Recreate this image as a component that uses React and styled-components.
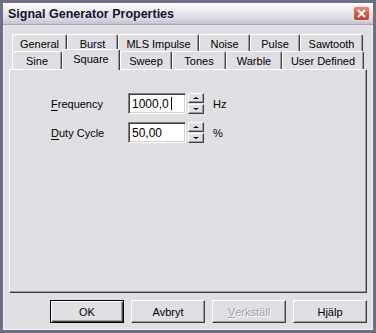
import React from 'react';
import styled, { createGlobalStyle, css } from 'styled-components';

const GlobalStyle = createGlobalStyle`
  html, body {
    margin: 0;
    padding: 0;
    background: #e0dfe3;
  }
  * { box-sizing: border-box; }
`;

const row1 = [
  ['General', 55],
  ['Burst', 51],
  ['MLS Impulse', 81],
  ['Noise', 51],
  ['Pulse', 50],
  ['Sawtooth', 63],
];

const row2 = [
  ['Sine', 50],
  ['Square', 58, true],
  ['Sweep', 52],
  ['Tones', 54],
  ['Warble', 56],
  ['User Defined', 82],
];

export default function App() {
  return (
    <>
      <GlobalStyle />
      <Window>
        <TitleBar>
          <Title>Signal Generator Properties</Title>
          <CloseBtn>
            <svg width="9" height="9" viewBox="0 0 9 9">
              <path d="M1 1 L8 8 M8 1 L1 8" stroke="#fff" strokeWidth="2" />
            </svg>
          </CloseBtn>
        </TitleBar>

        <Body>
          <TabRows>
            <TabRow>
              {row1.map(([label, w]) => (
                <Tab key={label} $w={w}>{label}</Tab>
              ))}
            </TabRow>
            <TabRow>
              {row2.map(([label, w, active]) => (
                <Tab key={label} $w={w} $active={active}>{label}</Tab>
              ))}
            </TabRow>
          </TabRows>

          <Panel>
            <FieldRow>
              <Label><u>F</u>requency</Label>
              <Spin>
                <Input>1000,0<Caret /></Input>
                <Spinner>
                  <SpinHalf><Arrow $up /></SpinHalf>
                  <SpinHalf><Arrow /></SpinHalf>
                </Spinner>
              </Spin>
              <Unit>Hz</Unit>
            </FieldRow>
            <FieldRow>
              <Label><u>D</u>uty Cycle</Label>
              <Spin>
                <Input>50,00</Input>
                <Spinner>
                  <SpinHalf><Arrow $up /></SpinHalf>
                  <SpinHalf><Arrow /></SpinHalf>
                </Spinner>
              </Spin>
              <Unit>%</Unit>
            </FieldRow>
          </Panel>

          <ButtonRow>
            <Button $default>OK</Button>
            <Button>Avbryt</Button>
            <Button $disabled><u>V</u>erkställ</Button>
            <Button>Hjälp</Button>
          </ButtonRow>
        </Body>
      </Window>
    </>
  );
}

const Window = styled.div`
  width: 376px;
  height: 333px;
  background: #e0dfe3;
  border: 3px solid #6e6e84;
  box-shadow: inset 0 0 0 1px #f4f4f8;
  display: flex;
  flex-direction: column;
  font-family: "Liberation Sans", Arial, sans-serif;
  font-size: 11px;
  color: #000;
`;

const TitleBar = styled.div`
  height: 22px;
  flex: none;
  display: flex;
  align-items: center;
  justify-content: space-between;
  padding: 0 3px 0 5px;
  background: linear-gradient(#fdfdfe 0%, #ececf1 35%, #d9d9e2 75%, #c3c3ce 100%);
  border-bottom: 1px solid #a7a7b6;
`;

const Title = styled.span`
  font-weight: bold;
  font-size: 12.5px;
  color: #14142a;
`;

const CloseBtn = styled.div`
  width: 17px;
  height: 15px;
  border-radius: 3px;
  border: 1px solid #f3d7d3;
  background: linear-gradient(#e38d83, #c9574b 60%, #b94236);
  display: flex;
  align-items: center;
  justify-content: center;
`;

const Body = styled.div`
  flex: 1;
  padding: 9px 6px 0 6px;
  display: flex;
  flex-direction: column;
`;

const TabRows = styled.div`
  display: flex;
  flex-direction: column;
  padding-left: 3px;
`;

const TabRow = styled.div`
  display: flex;
  height: 17px;
  & + & { height: 18px; }
`;

const Tab = styled.div`
  width: ${p => p.$w}px;
  flex: none;
  display: flex;
  align-items: center;
  justify-content: center;
  padding-top: 1px;
  background: #e0dfe3;
  border-top: 1px solid #fff;
  border-left: 1px solid #fff;
  border-right: 1px solid #404040;
  border-radius: 2px 2px 0 0;
  box-shadow: inset -1px 0 0 #9d9da1;
  position: relative;
  ${p => p.$active && css`
    margin-top: -2px;
    height: 21px;
    padding-top: 0;
    padding-bottom: 3px;
    z-index: 2;
  `}
`;

const Panel = styled.div`
  height: 224px;
  background: #e0dfe3;
  border-top: 1px solid #fff;
  border-left: 1px solid #fff;
  border-right: 1px solid #404040;
  border-bottom: 1px solid #404040;
  box-shadow: inset -1px -1px 0 #9d9da1;
  padding: 23px 0 0 41px;
  display: flex;
  flex-direction: column;
  gap: 8px;
`;

const FieldRow = styled.div`
  display: flex;
  align-items: center;
  height: 21px;
`;

const Label = styled.span`
  width: 77px;
  & u { text-decoration-thickness: 1px; text-underline-offset: 2px; }
`;

const Spin = styled.div`
  display: flex;
  align-items: center;
  gap: 2px;
`;

const Input = styled.div`
  width: 58px;
  height: 21px;
  background: #fff;
  border-top: 1px solid #808080;
  border-left: 1px solid #808080;
  border-right: 1px solid #fff;
  border-bottom: 1px solid #fff;
  box-shadow: inset 1px 1px 0 #404040, inset -1px -1px 0 #d4d0c8;
  padding: 0 0 0 3px;
  display: flex;
  align-items: center;
  font-size: 12px;
`;

const Caret = styled.span`
  display: inline-block;
  width: 1px;
  height: 13px;
  background: #000;
  margin-left: 2px;
`;

const Spinner = styled.div`
  width: 16px;
  height: 21px;
  display: flex;
  flex-direction: column;
  gap: 1px;
`;

const SpinHalf = styled.div`
  flex: 1;
  background: #e0dfe3;
  border-top: 1px solid #fff;
  border-left: 1px solid #fff;
  border-right: 1px solid #404040;
  border-bottom: 1px solid #404040;
  box-shadow: inset -1px -1px 0 #9d9da1;
  display: flex;
  align-items: center;
  justify-content: center;
`;

const Arrow = styled.span`
  width: 0;
  height: 0;
  border-left: 3px solid transparent;
  border-right: 3px solid transparent;
  ${p => p.$up
    ? css`border-bottom: 2px solid #000;`
    : css`border-top: 2px solid #000;`}
`;

const Unit = styled.span`
  margin-left: 9px;
`;

const ButtonRow = styled.div`
  display: flex;
  justify-content: flex-end;
  gap: 7px;
  margin-top: 7px;
`;

const Button = styled.div`
  width: 74px;
  height: 23px;
  display: flex;
  align-items: center;
  justify-content: center;
  background: #e0dfe3;
  border-top: 1px solid #fff;
  border-left: 1px solid #fff;
  border-right: 1px solid #404040;
  border-bottom: 1px solid #404040;
  box-shadow: inset -1px -1px 0 #9d9da1;
  ${p => p.$default && css`
    border: 1px solid #000;
    box-shadow: inset 1px 1px 0 #fff, inset -1px -1px 0 #404040, inset -2px -2px 0 #9d9da1;
  `}
  ${p => p.$disabled && css`
    color: #a0a0a4;
    text-shadow: 1px 1px 0 #fff;
  `}
`;
